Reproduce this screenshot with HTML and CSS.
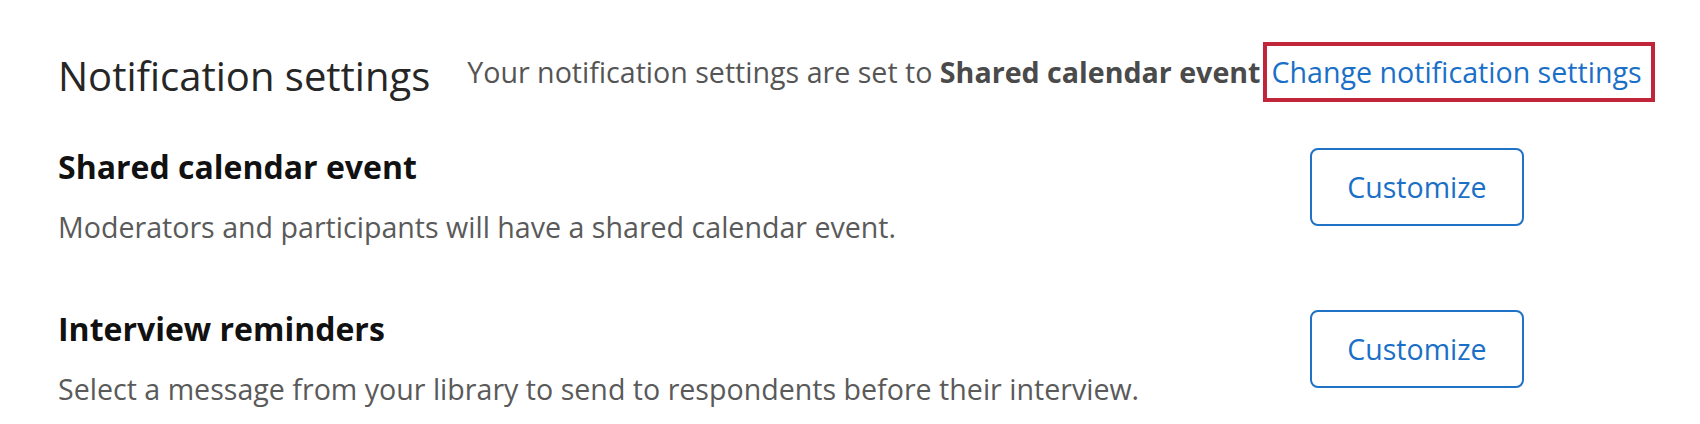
FILE: index.html
```html
<!DOCTYPE html>
<html lang="en">
<head>
    <meta charset="UTF-8">
    <meta name="viewport" content="width=device-width, initial-scale=1.0">
    <title>Notification settings</title>
    <link rel="stylesheet" href="styles.css">
</head>
<body>
    <div class="settings">
        <div class="settings-header">
            <h1 class="settings-title">Notification settings</h1>
            <p class="settings-summary">Your notification settings are set to <b>Shared calendar event</b></p>
            <a class="settings-link" href="#">Change notification settings</a>
        </div>

        <div class="setting">
            <div class="setting-text">
                <h2 class="setting-name">Shared calendar event</h2>
                <p class="setting-desc">Moderators and participants will have a shared calendar event.</p>
            </div>
            <button class="customize-btn">Customize</button>
        </div>

        <div class="setting">
            <div class="setting-text">
                <h2 class="setting-name">Interview reminders</h2>
                <p class="setting-desc">Select a message from your library to send to respondents before their interview.</p>
            </div>
            <button class="customize-btn">Customize</button>
        </div>
    </div>
</body>
</html>
```

FILE: styles.css
```css
body {
    margin: 0;
    background: #fff;
    font-family: "Open Sans", "Noto Sans", sans-serif;
}
.settings {
    padding: 42px 0 0 58px;
}

/* header line */
.settings-header {
    display: flex;
    align-items: center;
}
.settings-title {
    margin: 7px 0 0;
    font-size: 40px;
    line-height: 48px;
    font-weight: 400;
    color: #262626;
}
.settings-summary {
    margin: 0 0 0 37px;
    font-size: 28.6px;
    line-height: 36px;
    color: #555;
}
.settings-summary b {
    font-weight: 700;
    color: #4a4a4a;
}
.settings-link {
    margin-left: 3px;
    padding: 8px 9px 8px 4px;
    border: 4px solid #c1253a;
    font-size: 28.6px;
    line-height: 36px;
    color: #1a6fc7;
    text-decoration: none;
}

/* setting rows */
.setting {
    display: flex;
    justify-content: space-between;
    align-items: flex-start;
    width: 1466px;
    margin-top: 46px;
}
.setting + .setting {
    margin-top: 63px;
}
.setting-name {
    margin: 0;
    font-size: 32px;
    line-height: 38px;
    font-weight: 700;
    color: #111;
}
.setting-desc {
    margin: 21px 0 0;
    font-size: 28.6px;
    line-height: 40px;
    color: #5a5a5a;
}
.customize-btn {
    width: 214px;
    height: 78px;
    padding: 0;
    background: #fff;
    border: 2px solid #1f72c6;
    border-radius: 8px;
    font-family: inherit;
    font-size: 28.5px;
    font-weight: 500;
    color: #1a6fc7;
    cursor: pointer;
}
```
